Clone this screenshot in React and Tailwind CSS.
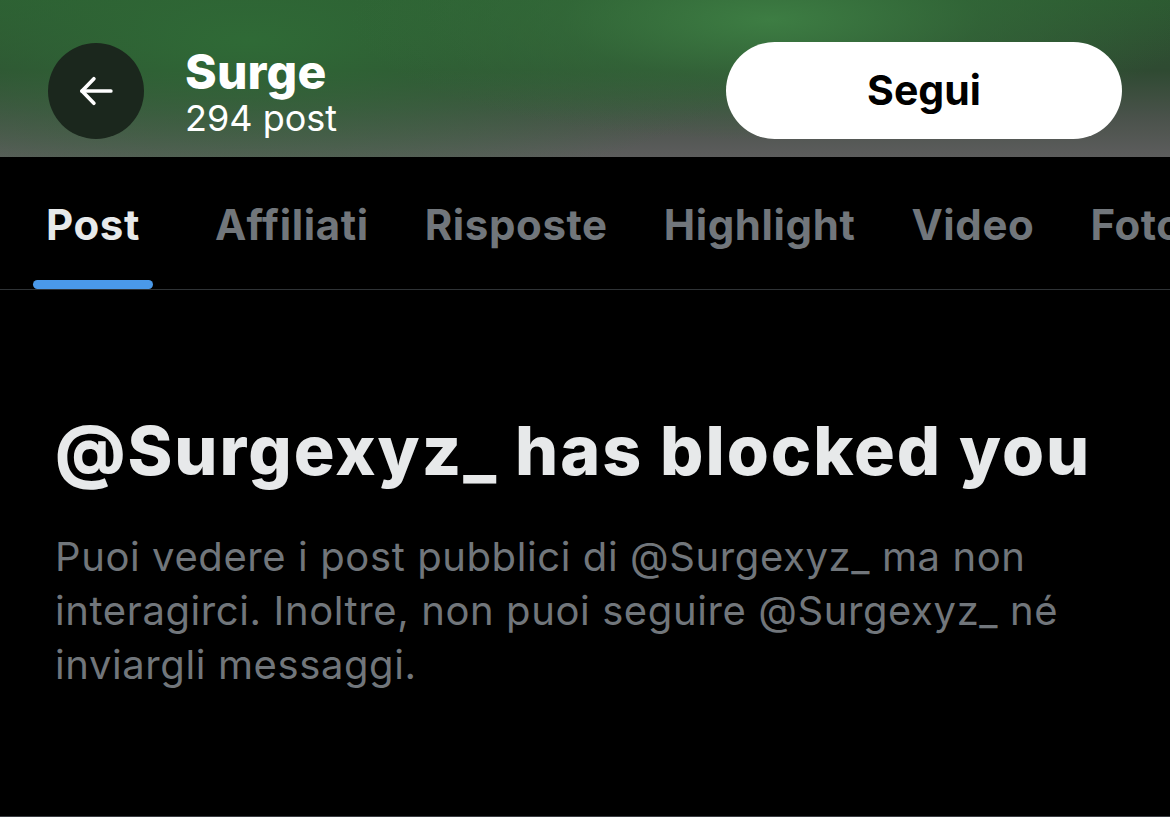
import React from 'react';

const tabs = [
  { label: 'Post', active: true },
  { label: 'Affiliati' },
  { label: 'Risposte' },
  { label: 'Highlight' },
  { label: 'Video' },
  { label: 'Foto' },
];

const BackIcon = () => (
  <svg viewBox="0 0 24 24" className="w-[42px] h-[42px]" fill="none" stroke="white" strokeWidth="2.1" strokeLinecap="round" strokeLinejoin="round">
    <path d="M20.5 12H4" />
    <path d="M10.8 5L4 12l6.8 7" />
  </svg>
);

export default function App() {
  return (
    <div className="w-[1170px] h-[817px] bg-black overflow-hidden font-['Inter','Noto_Sans',sans-serif] flex flex-col">
      {/* Header banner */}
      <div className="h-[157px] shrink-0 bg-[radial-gradient(ellipse_420px_120px_at_770px_20px,#3d7d43_0%,rgba(52,108,58,0.6)_50%,rgba(40,80,45,0)_100%),radial-gradient(ellipse_520px_160px_at_250px_40px,#2f6a36_0%,rgba(40,90,46,0)_100%),linear-gradient(180deg,#2c5a31_0%,#2f4a32_45%,#4a524b_75%,#5d5d5d_100%)] flex items-center justify-between pl-[48px] pr-[48px] pt-[24px]">
        <div className="flex items-center">
          <div className="w-[96px] h-[96px] rounded-full bg-[#1b271d] flex items-center justify-center">
            <BackIcon />
          </div>
          <div className="ml-[41px] pt-[2px] flex flex-col text-white">
            <span className="text-[48px] font-extrabold leading-[50px] tracking-[0.2px]">Surge</span>
            <span className="mt-[2px] text-[36px] leading-[38px] tracking-[0px]">294 post</span>
          </div>
        </div>
        <button className="w-[396px] h-[97px] rounded-full bg-white text-black text-[41px] font-bold tracking-[0px]">
          Segui
        </button>
      </div>

      {/* Tabs */}
      <div className="h-[133px] shrink-0 border-b border-[#2f3336] flex pl-[33px] pt-[44px] overflow-hidden">
        {tabs.map((t, i) => (
          <div key={t.label} className={`shrink-0 flex flex-col ${i === 0 ? 'mr-[62px]' : 'mr-[56px]'}`}>
            <span
              className={`text-[42px] font-bold tracking-[0.6px] leading-[48px] ${t.active ? 'text-[#e7e9ea] px-[13px]' : 'text-[#71767b]'}`}
            >
              {t.label}
            </span>
            {t.active && <div className="mt-[31px] h-[9px] w-full rounded-full bg-[#4a99e9]" />}
          </div>
        ))}
      </div>

      {/* Blocked notice */}
      <div className="flex-1 px-[55px] pt-[124px] border-b border-[#3a3d42]">
        <h1 className="text-[68px] font-extrabold text-[#e7e9ea] leading-[72px] tracking-[2px] whitespace-nowrap">
          @Surgexyz_ has blocked you
        </h1>
        <p className="mt-[44px] text-[40px] leading-[54px] text-[#71767b] tracking-[0.6px] w-[1050px]">
          Puoi vedere i post pubblici di @Surgexyz_ ma non interagirci. Inoltre, non puoi seguire @Surgexyz_ né inviargli messaggi.
        </p>
      </div>
    </div>
  );
}
